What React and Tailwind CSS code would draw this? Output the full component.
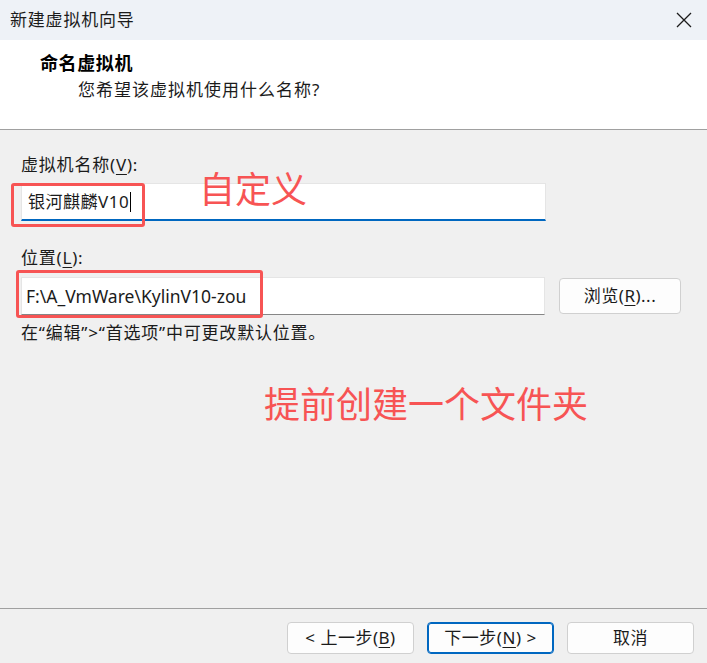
import React from "react";

const CJK = "font-['Segoe_UI','Noto_Sans','Noto_Sans_CJK_SC',sans-serif]";

// Win11-style push button used in the footer and beside the path field
const DialogButton = ({ children, primary = false, className = "" }) => (
  <button
    className={`flex items-center justify-center rounded-[4px] bg-[#fdfdfd] text-[17px] tracking-[0.5px] text-[#1b1b1b] ${
      primary ? "border border-[#0067c0] shadow-[inset_0_0_0_1px_#0067c0]" : "border border-[#d0d0d0]"
    } ${className}`}
  >
    {children}
  </button>
);

const Mnemonic = ({ ch }) => <u className="underline-offset-[3px]">{ch}</u>;

const CloseIcon = () => (
  <svg width="16" height="16" viewBox="0 0 16 16" fill="none" stroke="#1b1b1b" strokeWidth="1.3">
    <path d="M1 1 L15 15 M15 1 L1 15" />
  </svg>
);

export default function App() {
  return (
    <div className={`flex h-[663px] w-[707px] flex-col overflow-hidden bg-[#f0f0f0] ${CJK}`}>
      {/* title bar */}
      <div className="flex h-[40px] items-center justify-between bg-[#eef2f7] pl-[10px] pr-[15px]">
        <span className="text-[17px] tracking-[0.8px] text-[#1b1b1b]">新建虚拟机向导</span>
        <CloseIcon />
      </div>

      {/* wizard page header */}
      <div className="h-[90px] border-b border-[#a0a0a0] bg-white pl-[40px] pt-[12px]">
        <div className="text-[18px] font-bold leading-[22px] tracking-[0.6px] text-black">命名虚拟机</div>
        <div className="mt-[5px] pl-[38px] text-[17px] leading-[22px] tracking-[1px] text-[#1b1b1b]">您希望该虚拟机使用什么名称?</div>
      </div>

      {/* form */}
      <div className="relative flex-1 pl-[21px] pt-[25px] text-[17px] text-[#1b1b1b]">
        <label className="block leading-[20px] tracking-[0.8px]">
          虚拟机名称(<Mnemonic ch="V" />):
        </label>
        <div className="relative mt-[8px] h-[38px] w-[525px] border border-[#e5e5e5] border-b-2 border-b-[#0067c0] bg-white">
          <div className="flex h-full items-center pl-[6px]">
            <span className="tracking-[0.5px]">银河麒麟V10</span>
            <span className="ml-[1px] h-[20px] w-[1px] bg-black" />
          </div>
          <div className="absolute left-[-11px] top-[-1px] h-[44px] w-[134px] rounded-[3px] border-[3px] border-[#f75454]" />
        </div>

        <label className="mt-[27px] block leading-[20px] tracking-[0.8px]">
          位置(<Mnemonic ch="L" />):
        </label>
        <div className="mt-[9px] flex items-center gap-[14px]">
          <div className="relative h-[38px] w-[524px] border border-[#e5e5e5] border-b-[#868686] bg-white">
            <div className="flex h-full items-center pl-[4px] text-[17.5px]">F:\A_VmWare\KylinV10-zou</div>
            <div className="absolute left-[-6px] top-[-8px] h-[48px] w-[247px] rounded-[3px] border-[3px] border-[#f75454]" />
          </div>
          <DialogButton className="h-[36px] w-[122px]">
            浏览(<Mnemonic ch="R" />)...
          </DialogButton>
        </div>

        <p className="mt-[8px] leading-[20px] tracking-[0.8px]">在“编辑”&gt;“首选项”中可更改默认位置。</p>

        {/* annotations */}
        <span className="absolute left-[199px] top-[40px] text-[36px] leading-[40px] text-[#f75454]">自定义</span>
        <span className="absolute left-[264px] top-[255px] text-[36px] leading-[40px] text-[#f75454]">提前创建一个文件夹</span>
      </div>

      {/* footer buttons */}
      <div className="flex h-[55px] justify-end gap-[13px] border-t border-[#a0a0a0] pr-[13px] pt-[13px]">
        <DialogButton className="h-[32px] w-[127px]">
          &lt; 上一步(<Mnemonic ch="B" />)
        </DialogButton>
        <DialogButton primary className="h-[32px] w-[127px]">
          下一步(<Mnemonic ch="N" />) &gt;
        </DialogButton>
        <DialogButton className="h-[32px] w-[127px]">取消</DialogButton>
      </div>
    </div>
  );
}
